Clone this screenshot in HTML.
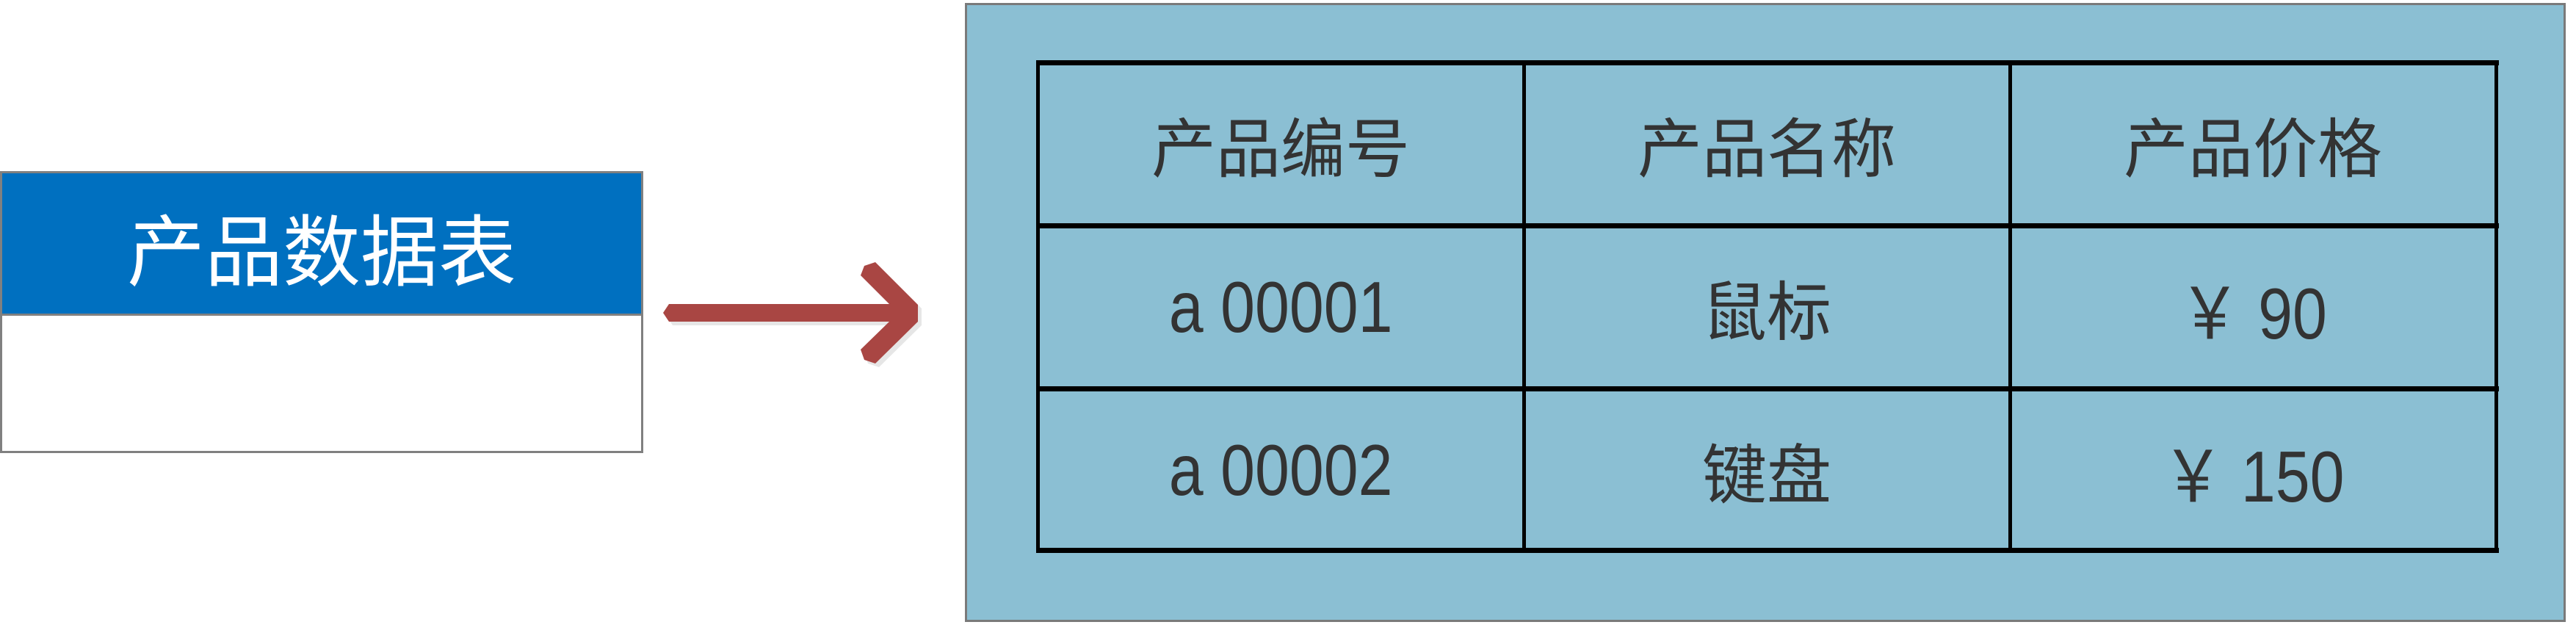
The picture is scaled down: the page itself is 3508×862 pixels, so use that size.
<!DOCTYPE html>
<html><head><meta charset="utf-8"><style>
html,body{margin:0;padding:0;background:#fff;width:3508px;height:862px;overflow:hidden;position:relative;font-family:"Liberation Sans","Noto Sans CJK SC",sans-serif}
.abs{position:absolute;box-sizing:border-box}
.t{position:absolute;display:flex;align-items:center;justify-content:center;color:#333;font-size:88px;white-space:pre}
.d span{display:inline-block;font-size:98px;transform:scaleX(0.86)}
.h{position:absolute;background:#000}
</style></head><body>
<div class="abs" style="left:0;top:233px;width:876px;height:384px;border:3px solid #808080;background:#fff"></div>
<div class="abs" style="left:0;top:233px;width:876px;height:197px;border:3px solid #808080;background:#0070C0;display:flex;align-items:center;justify-content:center;color:#fff;font-size:106px;padding-top:6px">产品数据表</div>
<svg class="abs" style="left:0;top:0" width="1300" height="862">
<polygon transform="translate(5,5)" fill="#e6e6e6" points="903,426 911,414 1211,414 1172,375 1177,362 1192,357 1250,415 1250,438 1192,495 1177,490 1172,476 1211,438 911,438"/>
<polygon fill="#A94643" points="903,426 911,414 1211,414 1172,375 1177,362 1192,357 1250,415 1250,438 1192,495 1177,490 1172,476 1211,438 911,438"/>
</svg>
<div class="abs" style="left:1314px;top:4px;width:2180px;height:843px;background:#8BBFD3;border:3px solid #7a7a7a"></div>
<div class="h" style="left:1411px;top:82px;width:1992px;height:7px"></div>
<div class="h" style="left:1411px;top:304px;width:1992px;height:7px"></div>
<div class="h" style="left:1411px;top:526px;width:1992px;height:7px"></div>
<div class="h" style="left:1411px;top:746px;width:1992px;height:7px"></div>
<div class="h" style="left:1411px;top:82px;width:5px;height:671px"></div>
<div class="h" style="left:2073px;top:82px;width:5px;height:671px"></div>
<div class="h" style="left:2735px;top:82px;width:5px;height:671px"></div>
<div class="h" style="left:3397px;top:82px;width:5px;height:671px"></div>
<div class="t" style="left:1414px;top:89px;width:660px;height:215px">产品编号</div>
<div class="t" style="left:2076px;top:89px;width:660px;height:215px">产品名称</div>
<div class="t" style="left:2738px;top:89px;width:660px;height:215px">产品价格</div>
<div class="t d" style="left:1414px;top:311px;width:660px;height:215px"><span>a 00001</span></div>
<div class="t" style="left:2076px;top:311px;width:660px;height:215px">鼠标</div>
<div class="t d" style="left:2738px;top:311px;width:660px;height:215px"><span>￥ 90</span></div>
<div class="t d" style="left:1414px;top:533px;width:660px;height:215px"><span>a 00002</span></div>
<div class="t" style="left:2076px;top:533px;width:660px;height:215px">键盘</div>
<div class="t d" style="left:2738px;top:533px;width:660px;height:215px"><span>￥ 150</span></div>
</body></html>
